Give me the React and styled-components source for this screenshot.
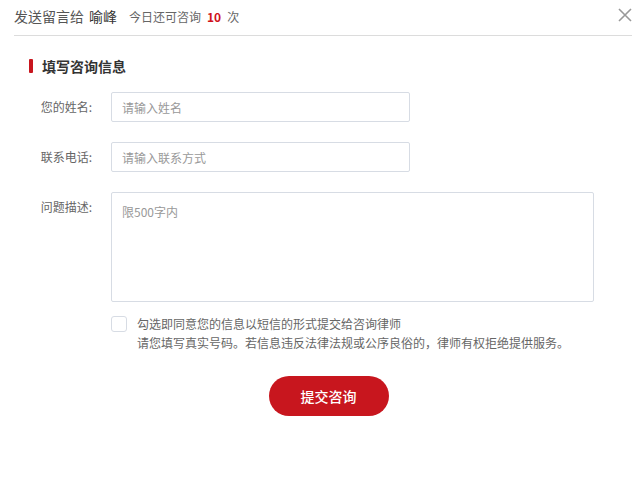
import React, { useState } from "react";
import styled, { createGlobalStyle } from "styled-components";

const GlobalStyle = createGlobalStyle`
  html, body {
    margin: 0;
    padding: 0;
    background: #fff;
  }
  body {
    font-family: "Noto Sans CJK SC", "Noto Sans", "Liberation Sans", sans-serif;
    color: #333;
  }
  * { box-sizing: border-box; }
`;

const Dialog = styled.div`
  width: 643px;
  height: 477px;
  padding-left: 14px;
  background: #fff;
`;

const Header = styled.div`
  display: flex;
  align-items: center;
  height: 36px;
  margin-right: 11px;
  padding-bottom: 3px;
  border-bottom: 1px solid #dcdcdc;
`;

const SendTo = styled.span`
  font-size: 14px;
  color: #555;
  b {
    font-weight: normal;
    color: #333;
    margin-left: 5px;
  }
`;

const Quota = styled.span`
  margin-left: 12px;
  font-size: 12px;
  color: #666;
  em {
    font-style: normal;
    font-weight: bold;
    color: #d0121b;
    margin: 0 6px;
  }
`;

const CloseBtn = styled.button`
  margin-left: auto;
  width: 14px;
  height: 14px;
  padding: 0;
  border: 0;
  background: none;
  cursor: pointer;
  display: flex;
  margin-top: -3px;
`;

const Section = styled.div`
  padding-top: 20px;
`;

const Title = styled.h3`
  display: flex;
  align-items: center;
  margin: 0 0 16px 15px;
  font-size: 14px;
  line-height: 20px;
  font-weight: bold;
  color: #333;
  &::before {
    content: "";
    width: 4px;
    height: 14px;
    border-radius: 1px;
    background: #c8161e;
    margin-right: 9px;
  }
`;

const Row = styled.div`
  display: grid;
  grid-template-columns: 78px auto;
  column-gap: 19px;
  align-items: start;
  margin-bottom: ${({ $gap }) => $gap}px;
`;

const Label = styled.label`
  text-align: right;
  font-size: 12px;
  line-height: 30px;
  color: #666;
`;

const Input = styled.input`
  width: ${({ $w }) => $w}px;
  height: 30px;
  border: 1px solid #d7dce4;
  border-radius: 2px;
  padding: 0 10px;
  font-family: inherit;
  font-size: 12px;
  color: #333;
  outline: none;
  &::placeholder { color: #999; }
`;

const TextArea = styled.textarea`
  width: 483px;
  height: 110px;
  border: 1px solid #d7dce4;
  border-radius: 2px;
  padding: 10px;
  font-family: inherit;
  font-size: 12px;
  line-height: 18px;
  resize: none;
  outline: none;
  display: block;
  &::placeholder { color: #999; }
`;

const Agree = styled.div`
  display: flex;
  align-items: flex-start;
  margin-left: 97px;
`;

const Check = styled.span`
  flex: none;
  width: 16px;
  height: 16px;
  border: 1px solid #d7dce4;
  border-radius: 3px;
  background: ${({ $on }) => ($on ? "#c8161e" : "#fff")};
  margin-right: 10px;
  cursor: pointer;
`;

const AgreeText = styled.p`
  margin: 0;
  margin-top: -2px;
  font-size: 12px;
  line-height: 19px;
  color: #666;
`;

const Actions = styled.div`
  display: flex;
  justify-content: center;
  margin-top: 24px;
`;

const Submit = styled.button`
  width: 120px;
  height: 40px;
  border: 0;
  border-radius: 20px;
  background: #c8161e;
  color: #fff;
  font-family: inherit;
  font-size: 14px;
  font-weight: 500;
  cursor: pointer;
`;

export default function App() {
  const [agree, setAgree] = useState(false);
  return (
    <Dialog>
      <GlobalStyle />
      <Header>
        <SendTo>
          发送留言给<b>喻峰</b>
        </SendTo>
        <Quota>
          今日还可咨询<em>10</em>次
        </Quota>
        <CloseBtn aria-label="关闭">
          <svg width="14" height="14" viewBox="0 0 14 14">
            <path d="M1 1 L13 13 M13 1 L1 13" stroke="#999" strokeWidth="1.6" />
          </svg>
        </CloseBtn>
      </Header>
      <Section>
        <Title>填写咨询信息</Title>
        <Row $gap={20}>
          <Label>您的姓名:</Label>
          <Input $w={299} placeholder="请输入姓名" />
        </Row>
        <Row $gap={20}>
          <Label>联系电话:</Label>
          <Input $w={299} placeholder="请输入联系方式" />
        </Row>
        <Row $gap={14}>
          <Label>问题描述:</Label>
          <TextArea placeholder="限500字内" />
        </Row>
        <Agree>
          <Check $on={agree} onClick={() => setAgree(!agree)} />
          <AgreeText>
            勾选即同意您的信息以短信的形式提交给咨询律师
            <br />
            请您填写真实号码。若信息违反法律法规或公序良俗的，律师有权拒绝提供服务。
          </AgreeText>
        </Agree>
        <Actions>
          <Submit>提交咨询</Submit>
        </Actions>
      </Section>
    </Dialog>
  );
}
